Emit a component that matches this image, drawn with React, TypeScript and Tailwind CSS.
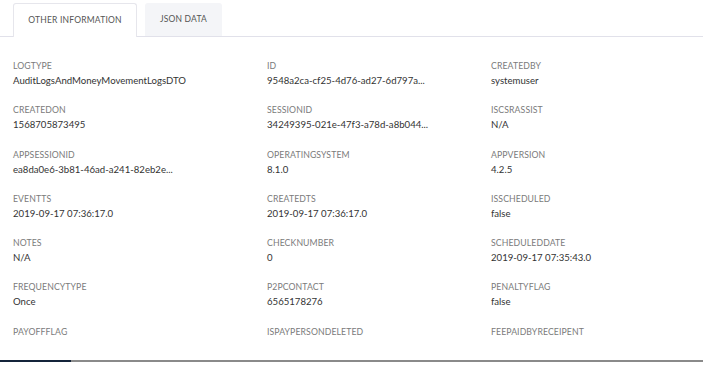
import React from 'react';

type Field = { label: string; value?: string };

const fields: Field[] = [
  { label: 'LOGTYPE', value: 'AuditLogsAndMoneyMovementLogsDTO' },
  { label: 'ID', value: '9548a2ca-cf25-4d76-ad27-6d797a...' },
  { label: 'CREATEDBY', value: 'systemuser' },
  { label: 'CREATEDON', value: '1568705873495' },
  { label: 'SESSIONID', value: '34249395-021e-47f3-a78d-a8b044...' },
  { label: 'ISCSRASSIST', value: 'N/A' },
  { label: 'APPSESSIONID', value: 'ea8da0e6-3b81-46ad-a241-82eb2e...' },
  { label: 'OPERATINGSYSTEM', value: '8.1.0' },
  { label: 'APPVERSION', value: '4.2.5' },
  { label: 'EVENTTS', value: '2019-09-17 07:36:17.0' },
  { label: 'CREATEDTS', value: '2019-09-17 07:36:17.0' },
  { label: 'ISSCHEDULED', value: 'false' },
  { label: 'NOTES', value: 'N/A' },
  { label: 'CHECKNUMBER', value: '0' },
  { label: 'SCHEDULEDDATE', value: '2019-09-17 07:35:43.0' },
  { label: 'FREQUENCYTYPE', value: 'Once' },
  { label: 'P2PCONTACT', value: '6565178276' },
  { label: 'PENALTYFLAG', value: 'false' },
  { label: 'PAYOFFFLAG' },
  { label: 'ISPAYPERSONDELETED' },
  { label: 'FEEPAIDBYRECEIPENT' },
];

const App: React.FC = () => {
  return (
    <div className="w-[703px] h-[367px] bg-white overflow-hidden flex flex-col font-['Lato',sans-serif]">
      <div className="flex items-end gap-2 pl-[13px] pt-[3px] border-b border-[#e1e1ea] h-[37px]">
        <div className="h-[34px] w-[124px] flex items-center justify-center bg-white border border-b-0 border-[#e6e6ec] rounded-t-[3px] -mb-px text-[8.5px] tracking-[0.2px] text-[#555]">
          OTHER INFORMATION
        </div>
        <div className="h-[33px] w-[77px] flex items-center justify-center bg-[#f4f5f8] rounded-t-[3px] text-[8.5px] tracking-[0.2px] text-[#555]">
          JSON DATA
        </div>
      </div>

      <div className="grid grid-cols-[254px_224px_1fr] auto-rows-[31.3px] pl-[13px] pt-[23px] gap-y-[13px] flex-1 content-start">
        {fields.map((f) => (
          <div key={f.label} className="flex flex-col gap-[4px]">
            <div className="text-[8.7px] leading-[11px] text-[#7b7b7b] tracking-[0.1px]">{f.label}</div>
            {f.value && (
              <div className="text-[9.6px] leading-[12px] text-[#333] whitespace-nowrap">{f.value}</div>
            )}
          </div>
        ))}
      </div>

      <div className="flex h-[2px] mb-[5px]">
        <div className="w-[71px] bg-[#14243a]" />
        <div className="flex-1 bg-[#8a8a8a]" />
      </div>
    </div>
  );
};

export default App;
